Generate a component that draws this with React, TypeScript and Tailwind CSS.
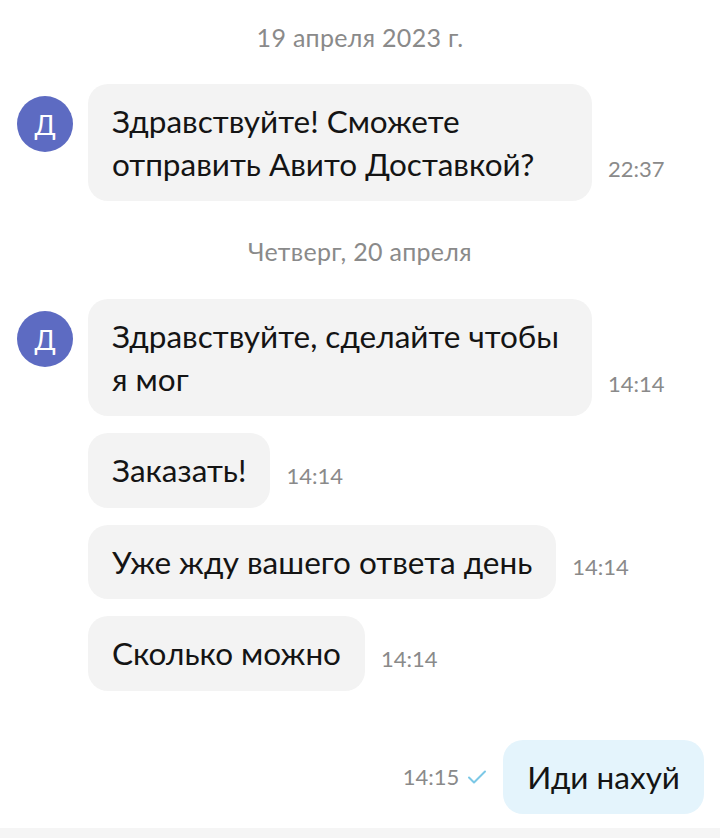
import React from "react";

type Msg = { text: string; time: string; avatar?: boolean };

const day1: Msg[] = [{ text: "Здравствуйте! Сможете отправить Авито Доставкой?", time: "22:37", avatar: true }];
const day2: Msg[] = [
  { text: "Здравствуйте, сделайте чтобы я мог", time: "14:14", avatar: true },
  { text: "Заказать!", time: "14:14" },
  { text: "Уже жду вашего ответа день", time: "14:14" },
  { text: "Сколько можно", time: "14:14" },
];

function DateLabel({ children }: { children: React.ReactNode }) {
  return <div className="text-center text-[25px] leading-[30px] tracking-[0.3px] text-[#8a8a8a]">{children}</div>;
}

function Incoming({ m }: { m: Msg }) {
  return (
    <div className="flex items-start">
      <div className="w-[88px] shrink-0 pl-[17px] pt-3">
        {m.avatar && (
          <div className="w-14 h-14 rounded-full bg-[#5d6bc2] flex items-center justify-center text-white text-[27px] leading-none">
            Д
          </div>
        )}
      </div>
      <div className="flex items-end gap-4">
        <div className="max-w-[504px] rounded-[20px] bg-[#f3f3f3] px-6 py-4 text-[31.5px] leading-[42.5px] text-[#141414]">
          {m.text}
        </div>
        <span className="pb-[18px] text-[22px] leading-[28px] text-[#8a8a8a]">{m.time}</span>
      </div>
    </div>
  );
}

export default function App() {
  return (
    <div className="w-[720px] h-[838px] bg-white flex flex-col overflow-hidden" style={{ fontFamily: "Lato, 'Noto Sans', sans-serif" }}>
      <div className="pt-[22px]">
        <DateLabel>19 апреля 2023 г.</DateLabel>
      </div>
      <div className="mt-8 flex flex-col gap-[17px]">
        {day1.map((m, i) => (
          <Incoming key={i} m={m} />
        ))}
      </div>
      <div className="mt-[35px]">
        <DateLabel>Четверг, 20 апреля</DateLabel>
      </div>
      <div className="mt-[33px] flex flex-col gap-[17px]">
        {day2.map((m, i) => (
          <Incoming key={i} m={m} />
        ))}
      </div>
      <div className="mt-[49px] flex items-center justify-end pr-4 gap-4">
        <div className="flex items-center gap-2">
          <span className="text-[22px] leading-[28px] text-[#8a8a8a]">14:15</span>
          <svg width="20" height="16" viewBox="0 0 20 16" fill="none">
            <path d="M2 8.5l5 5L18 2.5" stroke="#7cc8e6" strokeWidth="2" strokeLinecap="round" strokeLinejoin="round" />
          </svg>
        </div>
        <div className="rounded-[20px] bg-[#e4f4fc] px-6 py-4 text-[31.5px] leading-[42.5px] text-[#141414]">Иди нахуй</div>
      </div>
      <div className="mt-auto h-[10px] bg-[#f5f5f5]" />
    </div>
  );
}
